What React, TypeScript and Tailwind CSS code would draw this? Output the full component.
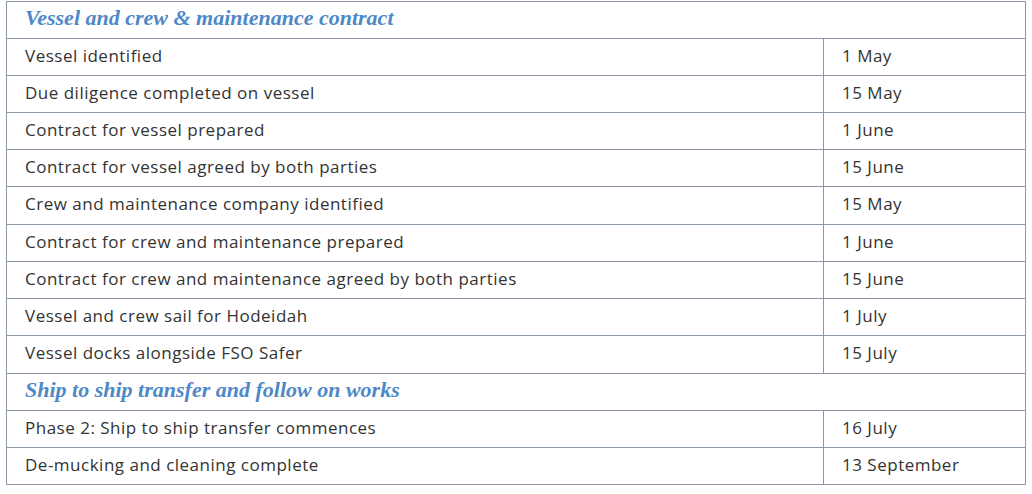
import React from "react";

type Row =
  | { kind: "head"; label: string; h: string }
  | { kind: "row"; label: string; date: string; h: string };

const rows: Row[] = [
  { kind: "head", label: "Vessel and crew & maintenance contract", h: "h-[36px]" },
  { kind: "row", label: "Vessel identified", date: "1 May", h: "h-[37px]" },
  { kind: "row", label: "Due diligence completed on vessel", date: "15 May", h: "h-[37px]" },
  { kind: "row", label: "Contract for vessel prepared", date: "1 June", h: "h-[37px]" },
  { kind: "row", label: "Contract for vessel agreed by both parties", date: "15 June", h: "h-[37px]" },
  { kind: "row", label: "Crew and maintenance company identified", date: "15 May", h: "h-[38px]" },
  { kind: "row", label: "Contract for crew and maintenance prepared", date: "1 June", h: "h-[37px]" },
  { kind: "row", label: "Contract for crew and maintenance agreed by both parties", date: "15 June", h: "h-[37px]" },
  { kind: "row", label: "Vessel and crew sail for Hodeidah", date: "1 July", h: "h-[37px]" },
  { kind: "row", label: "Vessel docks alongside FSO Safer", date: "15 July", h: "h-[38px]" },
  { kind: "head", label: "Ship to ship transfer and follow on works", h: "h-[37px]" },
  { kind: "row", label: "Phase 2: Ship to ship transfer commences", date: "16 July", h: "h-[37px]" },
  { kind: "row", label: "De-mucking and cleaning complete", date: "13 September", h: "h-[37px]" },
];

const bodyText =
  "flex items-center pl-[18px] pb-[3px] text-[17px] text-[#333333] [font-family:'Open_Sans',sans-serif] tracking-[0.5px]";

export default function App() {
  return (
    <div className="w-[1032px] h-[494px] bg-white pt-[1px] pl-[6px]">
      <div className="w-[1020px] border border-[#8c97a6] flex flex-col">
        {rows.map((r, i) => (
          <div
            key={i}
            className={`flex ${r.h} ${i > 0 ? "border-t border-[#8c97a6]" : ""}`}
          >
            {r.kind === "head" ? (
              <div className="flex items-center pl-[18px] pb-[5px] text-[22px] italic font-bold text-[#4f88c6] [font-family:'Liberation_Serif',serif] tracking-[0px]">
                {r.label}
              </div>
            ) : (
              <>
                <div className={`w-[817px] border-r border-[#8c97a6] ${bodyText}`}>
                  {r.label}
                </div>
                <div className={`flex-1 ${bodyText}`}>{r.date}</div>
              </>
            )}
          </div>
        ))}
      </div>
    </div>
  );
}
